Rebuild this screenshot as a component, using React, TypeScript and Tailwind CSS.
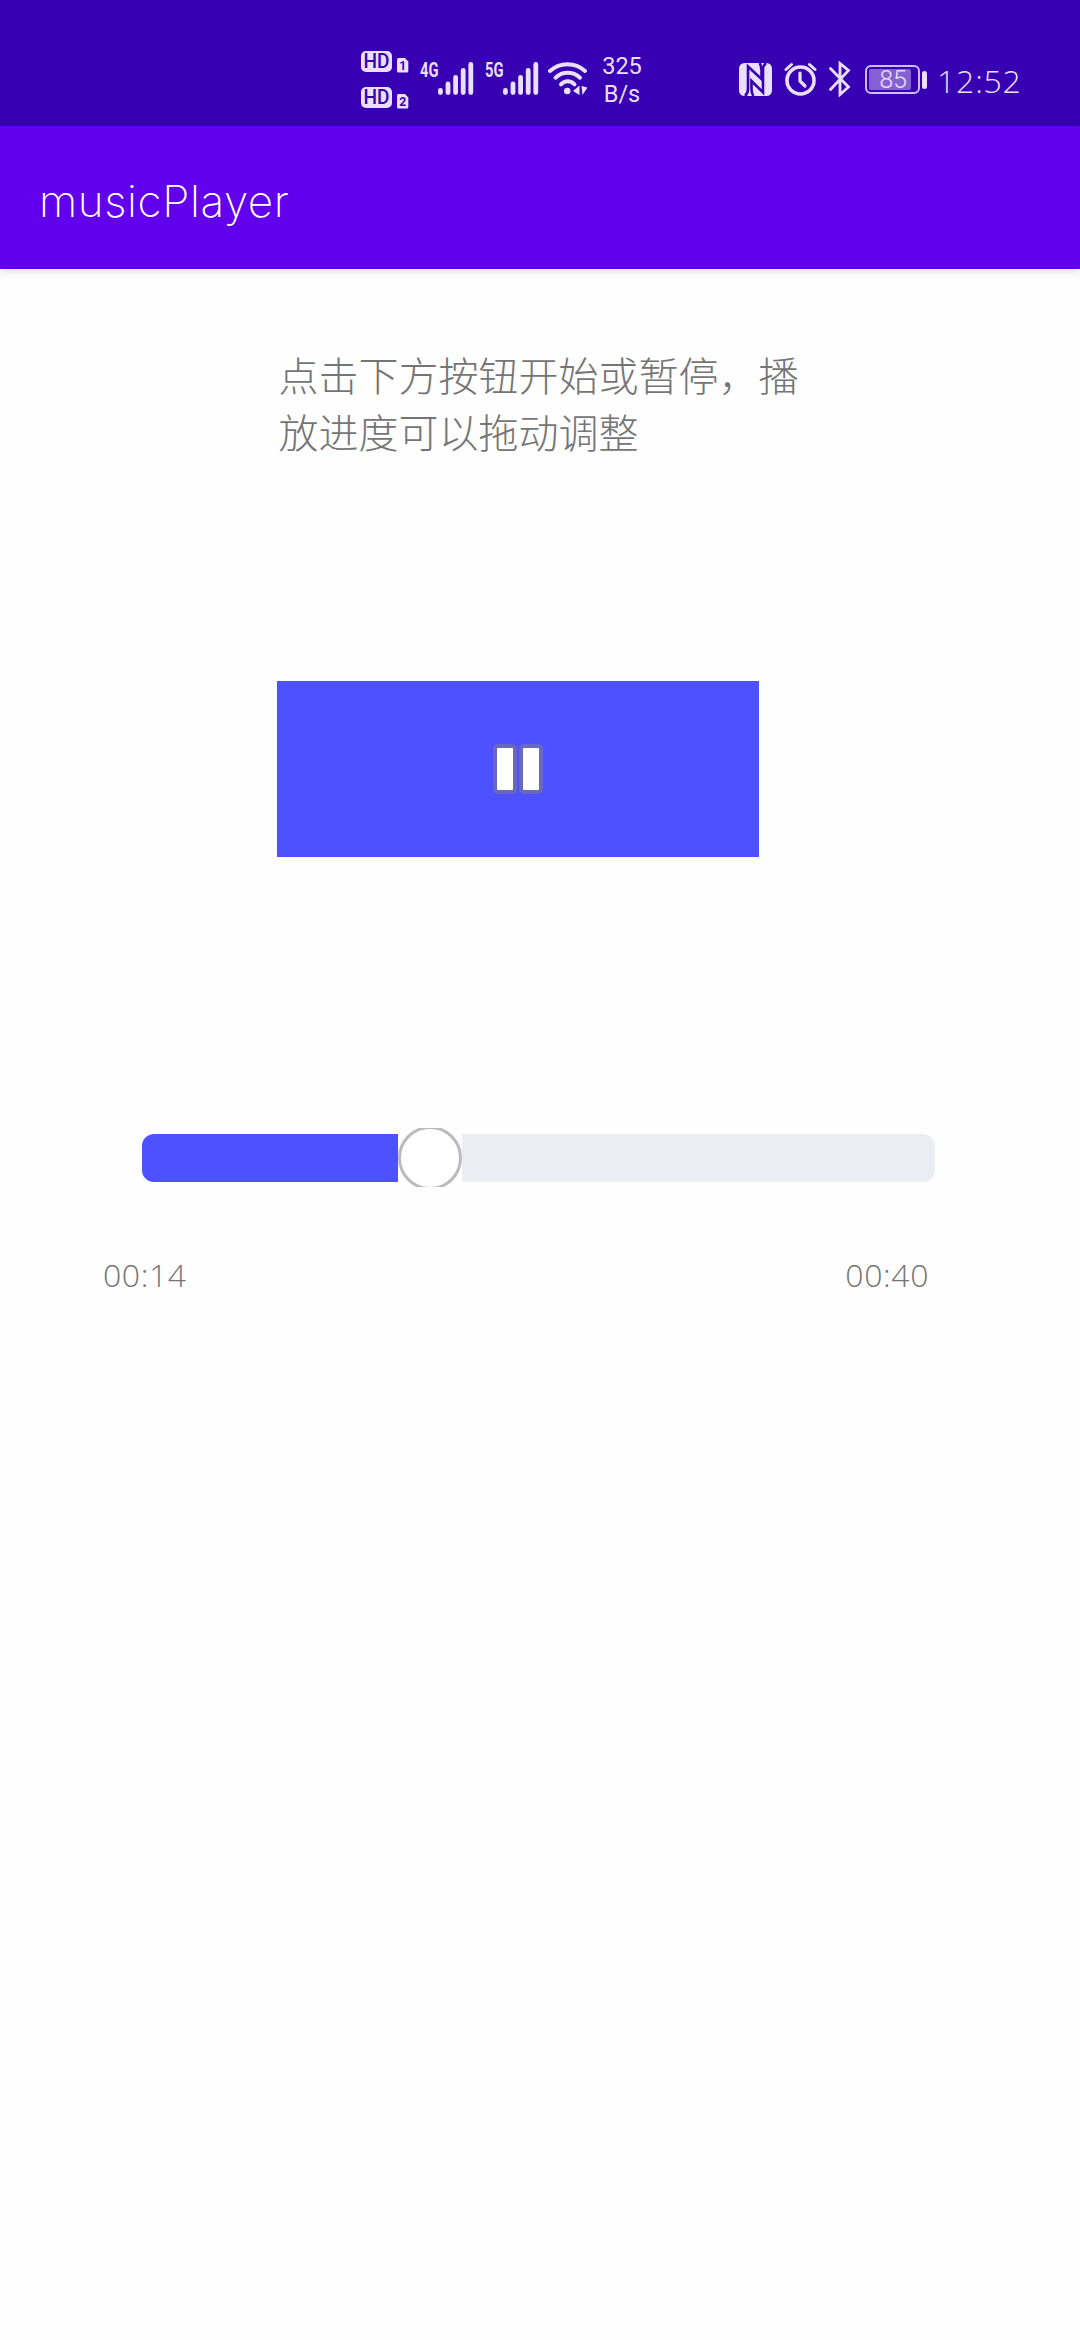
import type { ReactNode } from 'react'

const ICON = '#ebdfff'

function HdBadge({ sim }: { sim: string }) {
  return (
    <svg width="48" height="22" viewBox="0 0 48 22" className="overflow-visible">
      <rect x="0" y="0" width="31" height="21" rx="5" fill={ICON} />
      <text x="2.5" y="17.2" fontFamily="Roboto" fontWeight="500" fontSize="19.5" textLength="26" lengthAdjust="spacingAndGlyphs" fill="#3700b3">
        HD
      </text>
      <path d="M37.5 7h6.5l3.3 3.5v9.5a1.5 1.5 0 0 1-1.5 1.5h-8.3a1.5 1.5 0 0 1-1.5-1.5v-11.5a1.5 1.5 0 0 1 1.5-1.5z" fill={ICON} />
      <text x="38.2" y="19" fontFamily="Roboto" fontWeight="700" fontSize="13" textLength="7" lengthAdjust="spacingAndGlyphs" fill="#3700b3">
        {sim}
      </text>
    </svg>
  )
}

function Signal({ label }: { label: string }) {
  return (
    <div className="flex h-[34px] w-[54px] items-start">
      <svg width="18" height="18" viewBox="0 0 18 18" fill={ICON} className="shrink-0 overflow-visible">
        <text x="0" y="14.8" fontFamily="Roboto" fontWeight="700" fontSize="20" textLength="18.5" lengthAdjust="spacingAndGlyphs">
          {label}
        </text>
      </svg>
      <svg width="36" height="34" viewBox="18 0 36 34" fill={ICON} className="shrink-0">
        <rect x="18" y="26" width="4.8" height="7" rx="2.4" />
        <rect x="25.6" y="19.5" width="4.8" height="13.5" rx="2.4" />
        <rect x="33.2" y="13" width="4.8" height="20" rx="2.4" />
        <rect x="40.8" y="6" width="4.8" height="27" rx="2.4" />
        <rect x="48.4" y="0" width="4.8" height="33" rx="2.4" />
      </svg>
    </div>
  )
}

function Wifi() {
  return (
    <svg width="40" height="34" viewBox="0 0 40 34" fill="none" stroke={ICON} strokeWidth="4" strokeLinecap="round">
      <path d="M2 9c10-9 25-9 35 0" />
      <path d="M7.5 15.7c7-6.5 17.5-6.5 24.5 0" />
      <path d="M13 22.3c4-4 9.5-4 13.5 0" />
      <circle cx="19.2" cy="29" r="3.3" fill={ICON} stroke="none" />
      <path d="M25 29l6.5-5.5v9.5zM33.5 24l6 1.5-5 7.5z" fill={ICON} stroke="none" />
    </svg>
  )
}

function Nfc() {
  return (
    <svg width="33" height="33" viewBox="0 0 33 33">
      <rect width="33" height="33" rx="5.5" fill={ICON} />
      <g fill="none" stroke="#3700b3" strokeWidth="2.6">
        <path d="M6 33c2.500-2 3-4 3-7V3.500L22.500 16V7c0-3-.5-5-2-7" />
        <path d="M27 0c-2.500 2-3 4-3 7v22.500L12.500 18v8c0 3 .5 5 2 7" />
      </g>
    </svg>
  )
}

function Alarm() {
  return (
    <svg width="34" height="34" viewBox="0 0 34 34" fill="none" stroke={ICON} strokeLinecap="round" strokeLinejoin="round">
      <circle cx="16.5" cy="18.5" r="13.5" strokeWidth="3.6" />
      <path d="M16 11v8l5 5" strokeWidth="3.2" />
      <path d="M2 7.500l5.500-5M31 7.500l-5.500-5" strokeWidth="3" />
    </svg>
  )
}

function Bluetooth() {
  return (
    <svg width="22" height="36" viewBox="0 0 22 36" fill="none" stroke={ICON} strokeWidth="2.8" strokeLinecap="round">
      <path d="M1.5 7.5l18 18.5-8.5 7.5V2.5l8.5 7-18 19" />
    </svg>
  )
}

function Battery() {
  return (
    <div className="mt-[65px] flex items-center gap-[2px]">
      <div className="flex h-[29px] w-[55px] rounded-[6px] border-2 border-[#cfbcf3] p-[2px]">
        <div className="flex h-[21px] w-[42px] items-center justify-end rounded-[2px] bg-[#8560d3] pr-[4px] text-[24px] leading-none font-light tracking-[-0.5px] text-[#e6d9fc]">
          85
        </div>
      </div>
      <div className="h-[18px] w-[5px] rounded-[2.5px] bg-[#ebdfff]" />
    </div>
  )
}

function StatusItem({ className, children }: { className: string; children: ReactNode }) {
  return <div className={`shrink-0 ${className}`}>{children}</div>
}

function StatusBar() {
  return (
    <header className="flex h-[126px] items-start bg-[#3700b3] pl-[361px] text-[#ebdfff]">
      <div className="mt-[51px] flex flex-col gap-[14px]">
        <HdBadge sim="1" />
        <HdBadge sim="2" />
      </div>
      <StatusItem className="mt-[62px] ml-[11px]"><Signal label="4G" /></StatusItem>
      <StatusItem className="mt-[62px] ml-[11px]"><Signal label="5G" /></StatusItem>
      <StatusItem className="mt-[62px] ml-[9px]"><Wifi /></StatusItem>
      <div className="mt-[52px] ml-[10px] w-[48px] text-center font-[Roboto] text-[23.5px] leading-[28px]">
        <div>325</div>
        <div>B/s</div>
      </div>
      <StatusItem className="mt-[63px] ml-[93px]"><Nfc /></StatusItem>
      <StatusItem className="mt-[62px] ml-[12px]"><Alarm /></StatusItem>
      <StatusItem className="mt-[61px] ml-[11px]"><Bluetooth /></StatusItem>
      <StatusItem className="ml-[14px]"><Battery /></StatusItem>
      <div className="mt-[63px] ml-[10px] font-['Open_Sans'] text-[32px] leading-[36px] font-light tracking-[0.8px] whitespace-nowrap">12:52</div>
    </header>
  )
}

function PauseButton() {
  return (
    <button aria-label="Pause" className="mt-[220px] ml-[277px] flex h-[176px] w-[482px] items-center justify-center gap-[2px] bg-[#4d51ff]">
      <span className="h-[50px] w-[24px] rounded-[5px] border-4 border-[#6868bf] bg-white" />
      <span className="h-[50px] w-[24px] rounded-[5px] border-4 border-[#6868bf] bg-white" />
    </button>
  )
}

function SeekBar() {
  return (
    <div className="mt-[271px] ml-[142px] flex h-[59px] w-[793px] items-center overflow-hidden">
      <div className="h-[48px] w-[256px] rounded-l-[12px] bg-[#4d51ff]" />
      <div className="h-[64px] w-[64px] shrink-0 rounded-full border-[3px] border-[#bbbbbb] bg-white" />
      <div className="h-[48px] flex-1 rounded-r-[12px] bg-[#ecedf2]" />
    </div>
  )
}

export default function App() {
  return (
    <div className="h-[2340px] w-[1080px] overflow-hidden bg-[#fefefe] font-[Inter,'Noto_Sans_CJK_SC',sans-serif]">
      <StatusBar />
      <div className="flex h-[143px] items-center bg-[#6200ee] pt-[6px] pl-[39px] shadow-[0_2px_8px_rgba(0,0,0,0.13)]">
        <h1 className="text-[44px] leading-[52px] font-[250] tracking-[0.6px] text-white">musicPlayer</h1>
      </div>
      <main className="flex flex-col text-[#757575]">
        <p className="mt-[77px] mb-[1px] ml-[278.5px] w-[540px] font-['Noto_Sans_CJK_SC',sans-serif] text-[40px] leading-[57px] font-light">
          点击下方按钮开始或暂停，播放进度可以拖动调整
        </p>
        <PauseButton />
        <SeekBar />
        <div className="mt-[69px] ml-[103px] flex w-[826px] justify-between font-['Open_Sans'] text-[32px] leading-[38px] font-light tracking-[0.6px]">
          <span>00:14</span>
          <span>00:40</span>
        </div>
      </main>
    </div>
  )
}
